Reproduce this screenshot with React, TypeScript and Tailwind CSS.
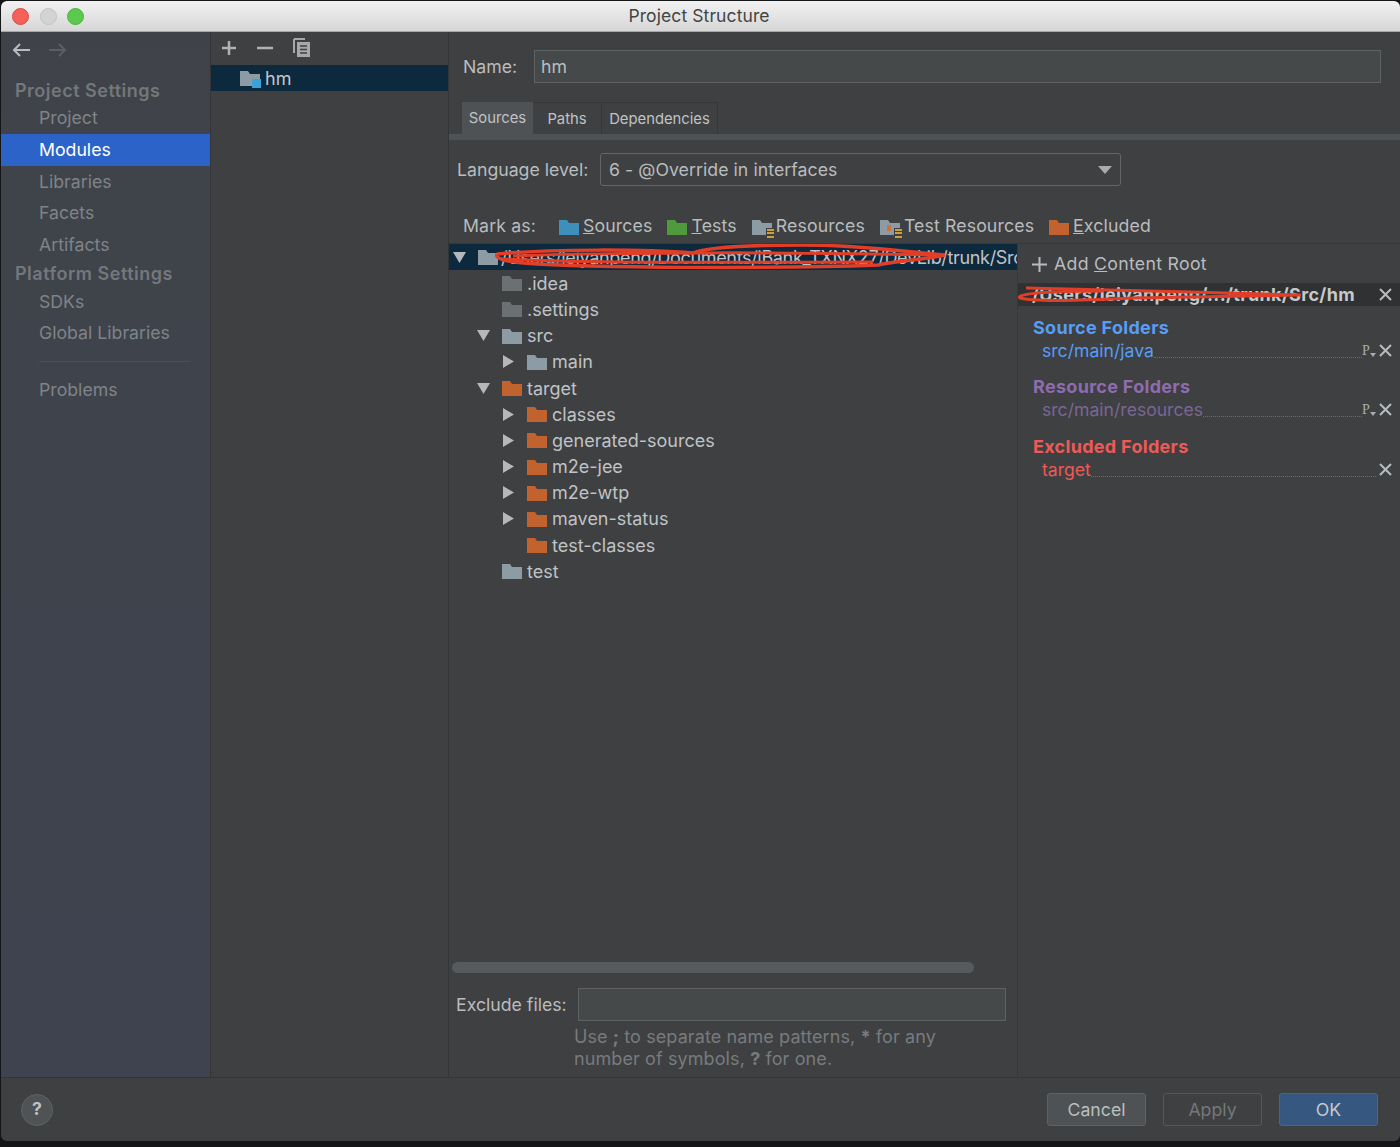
import React from "react";

const font = { fontFamily: "Inter, 'Noto Sans', sans-serif" };

function Folder({ color, className = "" }: { color: string; className?: string }) {
  return (
    <svg width="20" height="16" viewBox="0 0 20 16" className={"shrink-0 " + className}>
      <path d="M0 1h8l2 3h10v12H0z" fill={color} />
    </svg>
  );
}

function Badge({ color, kind }: { color: string; kind: "res" | "test" | "mod" }) {
  return (
    <span className="relative inline-block w-[20px] h-[16px] shrink-0">
      <Folder color={color} />
      {kind === "mod" ? (
        <span className="absolute right-[-1px] bottom-[-2px] w-[9px] h-[9px] bg-[#3ba1d6]" />
      ) : (
        <span className="absolute right-[-2px] bottom-[-3px] w-[8px] h-[10px] flex flex-col justify-between bg-[#3e4042] pl-[1px] pt-[1px]">
          <span className="h-[2px] bg-[#c9a13c]" />
          <span className="h-[2px] bg-[#c9a13c]" />
          <span className="h-[2px] bg-[#c9a13c]" />
        </span>
      )}
      {kind === "test" && <span className="absolute left-[7px] top-[6px] w-[4px] h-[6px] bg-[#d0703a]" />}
    </span>
  );
}

function Tri({ open }: { open: boolean }) {
  return open ? (
    <svg width="13" height="11" viewBox="0 0 13 11" className="shrink-0"><path d="M0 0h13L6.5 11z" fill="#b4b8ba" /></svg>
  ) : (
    <svg width="11" height="13" viewBox="0 0 11 13" className="shrink-0"><path d="M0 0l11 6.5L0 13z" fill="#b4b8ba" /></svg>
  );
}

function Cross({ className = "" }: { className?: string }) {
  return (
    <svg width="13" height="13" viewBox="0 0 13 13" className={"shrink-0 " + className}>
      <path d="M1 1l11 11M12 1L1 12" stroke="#b9bcbe" strokeWidth="2" />
    </svg>
  );
}

function PMark() {
  return (
    <span className="flex items-start w-[14px] h-[14px] mb-[5px] text-[14px] leading-[13px] text-[#a9acae] shrink-0" style={{ fontFamily: "'Liberation Serif', serif" }}>
      P
      <svg width="6" height="4" viewBox="0 0 6 4" className="mt-[9px]"><path d="M0 0h6L3 4z" fill="#a9acae" /></svg>
    </span>
  );
}

const sidebarItems: [string, "head" | "item" | "sel"][] = [
  ["Project Settings", "head"],
  ["Project", "item"],
  ["Modules", "sel"],
  ["Libraries", "item"],
  ["Facets", "item"],
  ["Artifacts", "item"],
  ["Platform Settings", "head"],
  ["SDKs", "item"],
  ["Global Libraries", "item"],
];

const tree: { name: string; depth: number; arrow?: "open" | "closed"; color: string }[] = [
  { name: ".idea", depth: 1, color: "#6b7073" },
  { name: ".settings", depth: 1, color: "#6b7073" },
  { name: "src", depth: 1, arrow: "open", color: "#8d9ba5" },
  { name: "main", depth: 2, arrow: "closed", color: "#8d9ba5" },
  { name: "target", depth: 1, arrow: "open", color: "#c2622e" },
  { name: "classes", depth: 2, arrow: "closed", color: "#c2622e" },
  { name: "generated-sources", depth: 2, arrow: "closed", color: "#c2622e" },
  { name: "m2e-jee", depth: 2, arrow: "closed", color: "#c2622e" },
  { name: "m2e-wtp", depth: 2, arrow: "closed", color: "#c2622e" },
  { name: "maven-status", depth: 2, arrow: "closed", color: "#c2622e" },
  { name: "test-classes", depth: 2, color: "#c2622e" },
  { name: "test", depth: 1, color: "#8d9ba5" },
];

function FolderGroup({ title, path, titleColor, pathColor, p, mt }: { title: string; path: string; titleColor: string; pathColor: string; p: boolean; mt: string }) {
  return (
    <div className={mt}>
      <div className={"pl-[15px] h-[24px] leading-[24px] text-[18px] font-bold tracking-[0.3px] " + titleColor}>{title}</div>
      <div className="flex items-end h-[23px] pl-[24px] pr-[8px]">
        <span className={"text-[17.6px] leading-[24px] " + pathColor}>{path}</span>
        <span className="flex-1 border-b border-dotted border-[#6a6d6f] mb-[5px]" />
        {p && <PMark />}
        <Cross className="ml-[3px] mb-[6px]" />
      </div>
    </div>
  );
}

export default function App() {
  return (
    <div style={font} className="w-[1400px] h-[1147px] bg-[#141516] pl-[1px] pt-[1px] pb-[6px] flex flex-col overflow-hidden text-[#b9bcbe] text-[17.7px]">
      <div className="h-[31px] shrink-0 rounded-t-[6px] bg-gradient-to-b from-[#f2f2f2] to-[#d6d6d6] border-b border-[#a8a8a8] flex items-center">
        <div className="flex items-center gap-[10.5px] pl-[11px]">
          <span className="w-[17px] h-[17px] rounded-full bg-[#f4605a] border border-[#e0493f]" />
          <span className="w-[17px] h-[17px] rounded-full bg-[#d3d3d3] border border-[#c2c2c2]" />
          <span className="w-[17px] h-[17px] rounded-full bg-[#5cc84f] border border-[#4db541]" />
        </div>
        <span className="flex-1 text-center text-[#444] text-[17.5px] tracking-[0.1px] pr-[86px] pt-[1px]">Project Structure</span>
      </div>

      <div className="flex flex-1 min-h-0">
        <div className="w-[210px] shrink-0 bg-gradient-to-b from-[#3f4349] to-[#3f4350] flex flex-col border-r border-[#333537]">
          <div className="flex items-center gap-[17px] pl-[11px] h-[37px] pb-[1px]">
            <svg width="19" height="14" viewBox="0 0 19 14"><path d="M18 7H2M8 1L2 7l6 6" stroke="#b9bcbe" strokeWidth="2" fill="none" /></svg>
            <svg width="19" height="14" viewBox="0 0 19 14"><path d="M1 7h16M11 1l6 6-6 6" stroke="#5b5f65" strokeWidth="2" fill="none" /></svg>
          </div>
          <div className="flex flex-col pt-[8px]">
            {sidebarItems.map(([t, k]) =>
              k === "head" ? (
                <div key={t} className="h-[25.4px] pl-[14px] leading-[27px] font-semibold tracking-[0.5px] text-[#74777b] text-[18px]">{t}</div>
              ) : (
                <div key={t} className={"h-[31.6px] leading-[31.6px] pl-[38px] " + (k === "sel" ? "bg-[#2c63c9] text-white" : "text-[#7f8388]")}>{t}</div>
              )
            )}
            <div className="ml-[38px] mr-[20px] mt-[12px] border-t border-[#4a4e55]" />
            <div className="h-[31px] leading-[31px] pl-[38px] mt-[12px] text-[#7f8388]">Problems</div>
          </div>
        </div>

        <div className="w-[238px] shrink-0 bg-[#3e4042] border-r border-[#333537] flex flex-col">
          <div className="h-[33px] flex items-center gap-[20px] pl-[10px] pb-[2px]">
            <svg width="16" height="16" viewBox="0 0 16 16"><path d="M8 1v14M1 8h14" stroke="#b0b3b5" strokeWidth="2.5" /></svg>
            <svg width="16" height="16" viewBox="0 0 16 16"><path d="M0 8h16" stroke="#b0b3b5" strokeWidth="2.5" /></svg>
            <svg width="18" height="20" viewBox="0 0 18 20"><path d="M1 1h11M1 1v14" stroke="#a6a9ab" strokeWidth="2" fill="none" /><rect x="4" y="4" width="13" height="15" fill="#a6a9ab" /><path d="M7 8h7M7 11.5h7M7 15h7" stroke="#3e4042" strokeWidth="1.5" /></svg>
          </div>
          <div className="h-[26px] bg-[#0d293e] flex items-center gap-[5px] pl-[29px] text-[#c4c7c9] text-[18px]">
            <Badge color="#8d9ba5" kind="mod" />
            <span>hm</span>
          </div>
        </div>

        <div className="flex-1 min-w-0 bg-[#3e4042] flex flex-col">
          <div className="flex items-center pl-[14px] pr-[19px] pt-[18px] h-[51px]">
            <span className="w-[71px] pt-[2px]">Name:</span>
            <div className="flex-1 h-[33px] bg-[#45494a] border border-[#5e6263] pl-[6px] leading-[31px] text-[#bbbebf]">hm</div>
          </div>
          <div className="flex pl-[13px] mt-[19px] h-[32px] text-[14.8px] leading-[33px] text-[#c0c3c5]">
            <div className="w-[71px] bg-[#4e5254] text-center">Sources</div>
            <div className="w-[69px] text-center border-r border-t border-[#353739]">Paths</div>
            <div className="w-[116px] text-center border-r border-t border-[#353739]">Dependencies</div>
          </div>
          <div className="h-[6px] bg-[#4e5254]" />
          <div className="flex items-center pl-[8px] mt-[13px] h-[33px]">
            <span className="w-[143px] pt-[1px]">Language level:</span>
            <div className="w-[521px] h-[33px] rounded-[3px] border border-[#646769] pl-[8px] pr-[8px] flex items-center justify-between">
              <span className="tracking-[0.05px] pt-[1px]">6 - @Override in interfaces</span>
              <svg width="14" height="8" viewBox="0 0 14 8"><path d="M0 0h14L7 8z" fill="#a9acae" /></svg>
            </div>
          </div>
          <div className="flex items-center pl-[14px] mt-[26px] h-[32px] pb-[3px] border-b border-[#36383a] tracking-[0.13px]">
            <span className="w-[96px]">Mark as:</span>
            <span className="flex items-center gap-[4px]"><Folder color="#3f8fbd" className="mt-[2px]" /><span><span className="underline">S</span>ources</span></span>
            <span className="flex items-center gap-[4px] ml-[15px]"><Folder color="#4f9a3d" className="mt-[2px]" /><span><span className="underline">T</span>ests</span></span>
            <span className="flex items-center gap-[4px] ml-[15px]"><span className="mt-[2px] flex"><Badge color="#8d9ba5" kind="res" /></span><span>Resources</span></span>
            <span className="flex items-center gap-[4px] ml-[15px]"><span className="mt-[2px] flex"><Badge color="#8d9ba5" kind="test" /></span><span>Test Resources</span></span>
            <span className="flex items-center gap-[4px] ml-[15px]"><Folder color="#c2622e" className="mt-[2px]" /><span><span className="underline">E</span>xcluded</span></span>
          </div>

          <div className="flex flex-1 min-h-0">
            <div className="w-[569px] shrink-0 border-r border-[#36383a] flex flex-col">
              <div className="flex-1 min-h-0 text-[18px]">
                <div className="h-[26.2px] bg-[#0d293e] flex items-center pl-[4px] overflow-hidden relative">
                  <Tri open />
                  <Folder color="#8d9ba5" className="ml-[12px]" />
                  <span className="ml-[3px] whitespace-nowrap text-[#c0c3c5] tracking-[-0.33px]">/Users/leiyanpeng/Documents/iBank_TXNX27/DevLib/trunk/Src</span>
                  <svg width="470" height="26" viewBox="0 0 470 26" className="absolute left-[44px] top-0">
                    <path d="M4 10C60 5 150 5 200 9C215 3 260 1 310 1C370 1 400 7 452 11C430 16 400 17 385 21C280 25 100 24 30 19C10 17 2 14 4 10" stroke="#e23d26" strokeWidth="3.5" fill="none" />
                    <path d="M20 12C120 8 300 8 450 11M10 15C120 20 250 18 380 18" stroke="#e23d26" strokeWidth="3" fill="none" />
                  </svg>
                </div>
                {tree.map((r) => (
                  <div key={r.name} className={"h-[26.2px] flex items-center " + (r.depth === 1 ? "pl-[53px]" : "pl-[78px]")}>
                    <span className="relative flex items-center text-[#c0c3c5]">
                      {r.arrow && (
                        <span className="absolute left-[-25px] inset-y-0 w-[13px] flex items-center justify-center">
                          <Tri open={r.arrow === "open"} />
                        </span>
                      )}
                      <Folder color={r.color} className="mr-[5px]" />
                      {r.name}
                    </span>
                  </div>
                ))}
              </div>
              <div className="h-[11px] ml-[3px] mr-[43px] rounded-full bg-[#565a5c] shrink-0" />
              <div className="flex items-center pl-[7px] mt-[15px] h-[33px]">
                <span className="w-[122px] pt-[1px]">Exclude files:</span>
                <div className="w-[428px] h-[33px] bg-[#45494a] border border-[#5e6263]" />
              </div>
              <div className="pl-[125px] mt-[5px] pb-[7px] text-[#787b7d] leading-[22px] text-[18px] tracking-[0.1px]">
                Use <b>;</b> to separate name patterns, <b>*</b> for any<br />number of symbols, <b>?</b> for one.
              </div>
            </div>

            <div className="flex-1 min-w-0 flex flex-col">
              <div className="h-[38px] flex items-center pl-[14px] gap-[7px] mt-[1px]">
                <svg width="15" height="15" viewBox="0 0 15 15"><path d="M7.5 0v15M0 7.5h15" stroke="#b9bcbe" strokeWidth="2" /></svg>
                <span className="tracking-[0.3px]">Add <span className="underline">C</span>ontent Root</span>
              </div>
              <div className="h-[23px] bg-[#2f3133] flex items-center justify-between pl-[14px] pr-[8px] font-bold text-[#c6c9cb] text-[18px] tracking-[0.33px] relative">
                <span className="whitespace-nowrap">/Users/leiyanpeng/.../trunk/Src/hm</span>
                <Cross />
                <svg width="300" height="23" viewBox="0 0 300 23" className="absolute left-[-4px] top-0">
                  <path d="M12 5C80 7 200 9 287 12C230 13 170 14 120 15C80 17 20 19 6 15C2 12 20 8 90 8" stroke="#e23d26" strokeWidth="3" fill="none" />
                </svg>
              </div>
              <FolderGroup mt="mt-[10px]" title="Source Folders" path="src/main/java" titleColor="text-[#589df6]" pathColor="text-[#589df6]" p />
              <FolderGroup mt="mt-[12px]" title="Resource Folders" path="src/main/resources" titleColor="text-[#8f6cad]" pathColor="text-[#7b6695]" p />
              <FolderGroup mt="mt-[13px]" title="Excluded Folders" path="target" titleColor="text-[#ee5a57]" pathColor="text-[#ee5a57]" p={false} />
            </div>
          </div>
        </div>
      </div>

      <div className="h-[64px] shrink-0 bg-[#3e4042] border-t border-[#333537] rounded-b-[6px] flex items-center pl-[20px] pr-[22px]">
        <span className="w-[32px] h-[32px] rounded-full bg-[#4f5355] border border-[#5e6263] flex items-center justify-center font-bold text-[#bfc2c4]">?</span>
        <div className="flex-1" />
        <div className="w-[99px] h-[33px] rounded-[3px] bg-[#4e5254] border border-[#5e6263] text-center leading-[32px] text-[#bbbebf]">Cancel</div>
        <div className="w-[99px] h-[33px] rounded-[3px] border border-[#55585a] text-center leading-[32px] text-[#75787a] ml-[17px]">Apply</div>
        <div className="w-[99px] h-[33px] rounded-[3px] bg-[#365880] border border-[#43688f] text-center leading-[32px] text-[#c6c9cb] ml-[17px]">OK</div>
      </div>
    </div>
  );
}
